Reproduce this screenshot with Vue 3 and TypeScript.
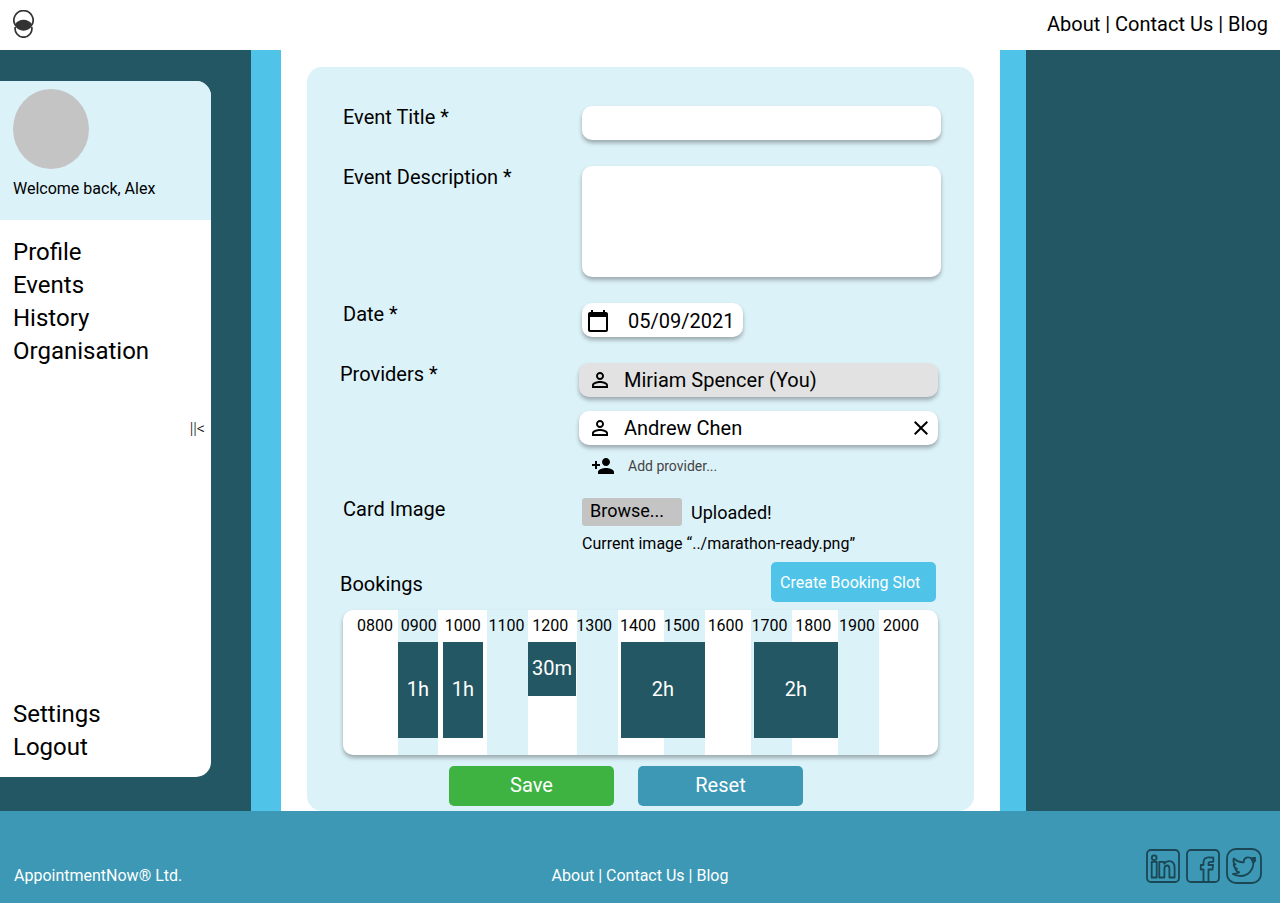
<script setup lang="ts">
import { ref } from 'vue'

interface Slot {
  start: number
  span: number
  label: string
  half?: boolean
}

const title = ref('')
const description = ref('')
const date = ref('05/09/2021')

const mainNav: string[] = ['Profile', 'Events', 'History', 'Organisation']
const accountNav: string[] = ['Settings', 'Logout']
const siteLinks: string[] = ['About', 'Contact Us', 'Blog']

const hours: string[] = Array.from({ length: 13 }, (_, i) => String(i + 8).padStart(2, '0') + '00')

// Positions on the day strip, in units of its total span.
const DAY_SPAN = 595
const bands = [
  { start: 55, span: 40 },
  { start: 144, span: 41 },
  { start: 234, span: 41 },
  { start: 321, span: 41 },
  { start: 408, span: 41 },
  { start: 495, span: 41 },
]
const slots: Slot[] = [
  { start: 55, span: 40, label: '1h' },
  { start: 100, span: 40, label: '1h' },
  { start: 185, span: 48, label: '30m', half: true },
  { start: 278, span: 84, label: '2h' },
  { start: 411, span: 84, label: '2h' },
]

function place(item: { start: number; span: number }) {
  return {
    left: `${(item.start / DAY_SPAN) * 100}%`,
    width: `${(item.span / DAY_SPAN) * 100}%`,
  }
}
</script>

<template>
  <div class="page">
    <header class="topbar">
      <a class="logo" href="#" aria-label="AppointmentNow home">
        <svg width="22" height="28" viewBox="0 0 22 28" fill="none" stroke="#333" stroke-width="1.7">
          <path d="M2.1 14.9A9.600 9.600 0 1 1 18.900 14.900" />
          <path d="M2.300 17A8.400 8.400 0 1 0 18.700 17" />
          <path d="M1.500 15.300C5 7.900 16 7.900 19.500 15.300C16 22.500 5 22.500 1.500 15.300Z" fill="#333" stroke="none" />
        </svg>
      </a>
      <nav class="site-links" aria-label="Site">
        <template v-for="(link, i) in siteLinks" :key="link">
          <span v-if="i > 0"> | </span><a href="#">{{ link }}</a>
        </template>
      </nav>
    </header>

    <main class="body">
      <aside class="side">
        <div class="panel">
          <div class="user">
            <div class="avatar"></div>
            <p class="welcome">Welcome back, Alex</p>
          </div>
          <nav class="menu" aria-label="Main">
            <a v-for="item in mainNav" :key="item" href="#">{{ item }}</a>
          </nav>
          <button class="collapse" type="button" aria-label="Collapse menu">||&lt;</button>
          <nav class="menu menu-end" aria-label="Account">
            <a v-for="item in accountNav" :key="item" href="#">{{ item }}</a>
          </nav>
        </div>
      </aside>

      <section class="content">
        <form class="card" @submit.prevent>
          <div class="row">
            <label class="caption" for="title">Event Title *</label>
            <input id="title" v-model="title" class="box" type="text" />
          </div>
          <div class="row">
            <label class="caption" for="description">Event Description *</label>
            <textarea id="description" v-model="description" class="box area"></textarea>
          </div>
          <div class="row">
            <label class="caption" for="date">Date *</label>
            <div class="box date">
              <svg width="24" height="24" viewBox="0 0 24 24" aria-hidden="true">
                <path d="M20 3h-1V1h-2v2H7V1H5v2H4c-1.100 0-2 .9-2 2v16c0 1.100.9 2 2 2h16c1.100 0 2-.9 2-2V5c0-1.100-.9-2-2-2zm0 18H4V8h16v13z" />
              </svg>
              <input id="date" v-model="date" type="text" />
            </div>
          </div>
          <div class="row shifted" role="group" aria-labelledby="providers">
            <span id="providers" class="caption">Providers *</span>
            <div class="providers">
              <div class="box provider own">
                <svg width="24" height="24" viewBox="0 0 24 24" aria-hidden="true">
                  <path d="M12 5.900a2.100 2.100 0 1 1 0 4.200 2.100 2.100 0 0 1 0-4.200m0 9c2.970 0 6.100 1.460 6.100 2.100v1.100H5.900V17c0-.64 3.130-2.100 6.100-2.100M12 4C9.790 4 8 5.790 8 8s1.790 4 4 4 4-1.790 4-4-1.790-4-4-4zm0 9c-2.670 0-8 1.340-8 4v3h16v-3c0-2.660-5.330-4-8-4z" />
                </svg>
                <span>Miriam Spencer (You)</span>
              </div>
              <div class="box provider">
                <svg width="24" height="24" viewBox="0 0 24 24" aria-hidden="true">
                  <path d="M12 5.900a2.100 2.100 0 1 1 0 4.200 2.100 2.100 0 0 1 0-4.200m0 9c2.970 0 6.100 1.460 6.100 2.100v1.100H5.900V17c0-.64 3.130-2.100 6.100-2.100M12 4C9.790 4 8 5.790 8 8s1.790 4 4 4 4-1.790 4-4-1.790-4-4-4zm0 9c-2.670 0-8 1.340-8 4v3h16v-3c0-2.660-5.330-4-8-4z" />
                </svg>
                <span>Andrew Chen</span>
                <button class="remove" type="button" aria-label="Remove Andrew Chen">
                  <svg width="24" height="24" viewBox="0 0 24 24" aria-hidden="true">
                    <path d="M19 6.410L17.590 5 12 10.590 6.410 5 5 6.410 10.590 12 5 17.590 6.410 19 12 13.410 17.590 19 19 17.590 13.410 12z" />
                  </svg>
                </button>
              </div>
              <button class="add" type="button">
                <svg width="24" height="24" viewBox="0 0 24 24" aria-hidden="true">
                  <path d="M15 12c2.210 0 4-1.790 4-4s-1.790-4-4-4-4 1.790-4 4 1.790 4 4 4zm-9-2V7H4v3H1v2h3v3h2v-3h3v-2H6zm9 4c-2.670 0-8 1.340-8 4v2h16v-2c0-2.660-5.330-4-8-4z" />
                </svg>
                <span>Add provider...</span>
              </button>
            </div>
          </div>
          <div class="row image-row" role="group" aria-labelledby="card-image">
            <span id="card-image" class="caption">Card Image</span>
            <div>
              <div class="upload">
                <button class="browse" type="button">Browse...</button>
                <span class="status">Uploaded!</span>
              </div>
              <p class="current">Current image “../marathon-ready.png”</p>
            </div>
          </div>

          <div class="bookings-head">
            <h2>Bookings</h2>
            <button class="btn create" type="button">Create Booking Slot</button>
          </div>
          <div class="timeline">
            <div v-for="band in bands" :key="band.start" class="band" :style="place(band)"></div>
            <div class="hours">
              <span v-for="hour in hours" :key="hour">{{ hour }}</span>
            </div>
            <div class="slots">
              <button
                v-for="slot in slots"
                :key="slot.start"
                type="button"
                class="slot"
                :class="{ half: slot.half }"
                :style="place(slot)"
              >{{ slot.label }}</button>
            </div>
          </div>

          <div class="actions">
            <button class="btn save" type="submit">Save</button>
            <button class="btn reset" type="button">Reset</button>
          </div>
        </form>
      </section>
      <div class="side"></div>
    </main>

    <footer class="footer">
      <span>AppointmentNow® Ltd.</span>
      <nav aria-label="Footer">
        <template v-for="(link, i) in siteLinks" :key="link">
          <span v-if="i > 0"> | </span><a href="#">{{ link }}</a>
        </template>
      </nav>
      <div class="social">
        <a href="#" aria-label="LinkedIn">
          <svg width="34" height="34" viewBox="0 0 34 34">
            <rect x="1" y="1" width="32" height="32" rx="4" />
            <circle cx="8.200" cy="8.700" r="2.400" />
            <path d="M5.700 12.800h5v15.700h-5z" />
            <path d="M13.300 12.800h4.900v1.900c1.200-1.700 2.800-2.600 4.800-2.600 4 0 5.600 2.600 5.600 6.800v9.600h-5.200v-8.800c0-2-.7-3.200-2.300-3.200s-2.700 1.300-2.700 3.200v8.800h-5.100z" />
          </svg>
        </a>
        <a href="#" aria-label="Facebook">
          <svg width="34" height="34" viewBox="0 0 34 34">
            <rect x="1" y="1" width="32" height="32" rx="4" />
            <path d="M17.500 33V20.500h-2.700V16h2.700v-2.500c0-3.600 1.800-5.200 5.200-5.200 1.600 0 3.200 0 4.600.4v4.100h-2.600c-1.600 0-2.200.5-2.200 1.900V16h4.600l-.6 4.500h-4V33" />
          </svg>
        </a>
        <a href="#" aria-label="Twitter">
          <svg width="36" height="36" viewBox="0 0 36 36">
            <rect x="1" y="1" width="34" height="34" rx="9" />
            <path d="M7.800 10.500C10.500 13 14 14.500 17.800 14.300C17.300 11 19.800 9.200 22.500 9.300C23.800 9.300 25 9.900 25.800 10.800L29 9.800L27.900 12.300L29.200 12.400L27.400 14.500C27.400 21.500 22.500 28 14.500 28C11.500 28 9 27.300 6.900 26C9.400 26 11.500 25.400 13.200 24.200C11 23.800 9.800 22.600 9.200 21L11 20.800C8.800 20 7.700 18.200 7.700 16.200L9.500 16.600C7.500 15 6.900 12.800 7.800 10.500Z" />
            <path class="solid" d="M25.300 10.500L29 9.800L27.900 12.300L29.200 12.400L27.200 14.500Z" />
          </svg>
        </a>
      </div>
    </footer>
  </div>
</template>

<style>
body {
  margin: 0;
}
</style>

<style scoped>
.page {
  display: flex;
  flex-direction: column;
  min-height: 100vh;
  font-family: Roboto, "Liberation Sans", sans-serif;
  font-size: 20px;
  line-height: 24px;
  color: #000;
  background: #fff;
}

.page *,
.page *::before {
  box-sizing: border-box;
}

svg {
  display: block;
  flex: none;
}

a {
  color: inherit;
  text-decoration: none;
}

p,
h2 {
  margin: 0;
  font-weight: 400;
}

button,
input,
textarea {
  font: inherit;
  color: inherit;
  border: 0;
  margin: 0;
  padding: 0;
  background: none;
}

button {
  cursor: pointer;
}

.topbar {
  display: flex;
  align-items: center;
  justify-content: space-between;
  height: 50px;
  padding: 0 12px 2px 13px;
}

.body {
  flex: 1;
  display: grid;
  grid-template-columns: 251px minmax(0, 1fr) 254px;
}

.side {
  display: flex;
  background: #245764;
}

.panel {
  display: flex;
  flex-direction: column;
  width: 211px;
  margin: 31px 0 34px;
  border-radius: 0 15px 15px 0;
  overflow: hidden;
  background: #fff;
}

.user {
  height: 139px;
  padding: 8px 13px;
  background: #dcf2f9;
}

.avatar {
  width: 76px;
  height: 80px;
  border-radius: 50%;
  background: #c4c4c4;
}

.welcome {
  margin-top: 8px;
  font-size: 16px;
}

.menu {
  display: flex;
  flex-direction: column;
  padding: 16px 13px 0;
  font-size: 24px;
  line-height: 33px;
}

.menu-end {
  margin-top: auto;
  padding: 0 13px 13px;
}

.collapse {
  align-self: flex-end;
  margin: 49px 6px 0 0;
  font-size: 16px;
  font-weight: 300;
}

.content {
  display: flex;
  border: solid #4fc4e8;
  border-width: 0 26px 0 30px;
  padding: 17px 26px 0;
}

.card {
  flex: 1;
  min-width: 0;
  padding: 39px 33px 5px;
  border-radius: 15px;
  background: #dcf2f9;
}

.row {
  display: grid;
  grid-template-columns: 239px minmax(0, 1fr);
  align-items: start;
  margin-bottom: 26px;
  padding-left: 3px;
}

.row.shifted {
  margin-bottom: 20px;
  padding: 0 3px 0 0;
}

.caption {
  line-height: 22px;
}

.box {
  height: 34px;
  border-radius: 10px;
  background: #fff;
  box-shadow: 0 3px 4px rgba(0, 0, 0, 0.3);
}

input.box,
textarea.box {
  width: 100%;
  padding: 0 12px;
}

textarea.area {
  display: block;
  height: 111px;
  padding: 6px 12px;
  resize: none;
}

.date {
  display: flex;
  align-items: center;
  gap: 18px;
  width: 161px;
  padding: 2px 4px 0;
}

.date input {
  width: 111px;
}

.providers {
  display: flex;
  flex-direction: column;
  gap: 14px;
}

.provider {
  display: flex;
  align-items: center;
  gap: 12px;
  padding: 0 5px 0 9px;
}

.own {
  background: #e2e2e2;
}

.remove {
  margin-left: auto;
}

.add {
  display: flex;
  align-items: center;
  gap: 13px;
  align-self: flex-start;
  margin-top: -5px;
  padding-left: 12px;
  font-size: 14px;
}

.add span {
  color: #444;
}

.image-row {
  margin-bottom: 6px;
}

.upload {
  display: flex;
  align-items: center;
  gap: 9px;
  font-size: 18px;
}

.browse {
  width: 100px;
  height: 28px;
  padding: 0 8px 2px;
  border-radius: 3px;
  text-align: left;
  background: #c4c4c4;
}

.status {
  padding-top: 2px;
}

.current {
  margin-top: 6px;
  font-size: 16px;
}

.bookings-head {
  display: flex;
  align-items: center;
  justify-content: space-between;
  padding-right: 5px;
}

.bookings-head h2 {
  padding-top: 4px;
  font-size: 20px;
}

.btn {
  width: 165px;
  height: 40px;
  padding-bottom: 2px;
  border-radius: 5px;
  color: #fff;
}

.create {
  padding: 2px 9px 0;
  font-size: 16px;
  text-align: left;
  background: #4fc4e8;
}

.timeline {
  position: relative;
  height: 145px;
  margin: 8px 3px 0;
  border-radius: 10px;
  background: #fff;
  box-shadow: 0 3px 4px rgba(0, 0, 0, 0.3);
}

.band {
  position: absolute;
  top: 0;
  bottom: 0;
  background: #dcf2f9;
}

.hours {
  position: relative;
  display: flex;
  justify-content: space-between;
  padding: 4px 19px 4px 14px;
  font-size: 16px;
}

.slots {
  position: relative;
  height: 96px;
}

.slot {
  position: absolute;
  top: 0;
  height: 100%;
  padding-bottom: 2px;
  color: #fff;
  background: #245764;
}

.slot.half {
  height: 54px;
}

.actions {
  display: flex;
  justify-content: center;
  gap: 24px;
  margin-top: 11px;
  padding-right: 29px;
}

.save {
  background: #3eb342;
}

.reset {
  background: #3c98b4;
}

.footer {
  display: grid;
  grid-template-columns: 1fr auto 1fr;
  align-items: end;
  height: 92px;
  padding: 0 14px 19px;
  font-size: 16px;
  line-height: 16px;
  color: #fff;
  background: #3c98b4;
}

.social {
  display: flex;
  align-items: center;
  justify-content: flex-end;
  gap: 6px;
  padding-right: 4px;
}

.social svg {
  fill: none;
  stroke: #1b4653;
  stroke-width: 1.8;
  stroke-linejoin: round;
}

.social .solid {
  fill: #1b4653;
}
</style>
